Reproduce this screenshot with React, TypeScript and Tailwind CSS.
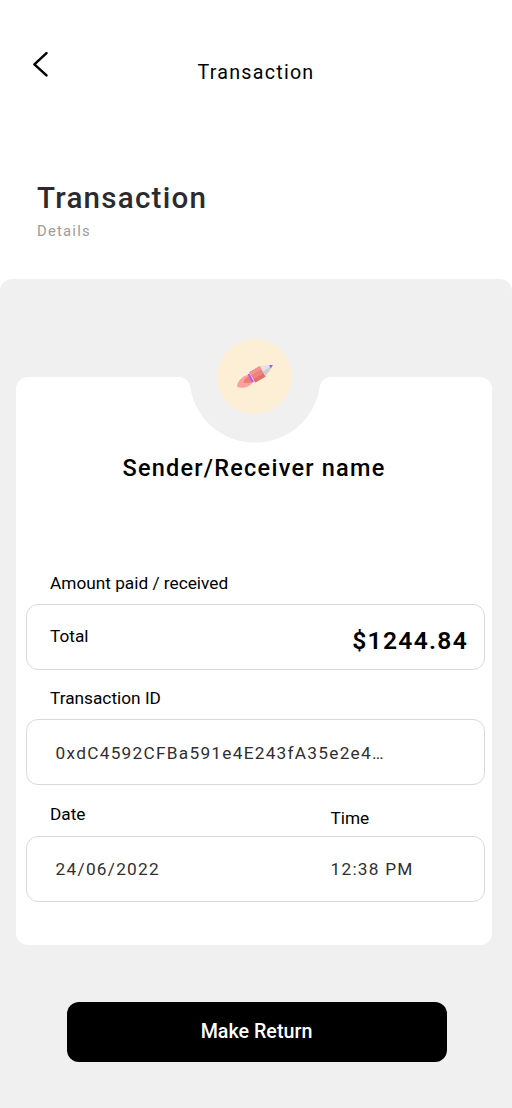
import React from "react";

function BackIcon() {
  return (
    <svg className="block h-[28px] w-[18px]" viewBox="0 0 18 28" fill="none" aria-hidden="true">
      <path d="M14.5 3.2 2.4 14.3 14.5 25.4" stroke="#000" strokeWidth="2.5" strokeLinecap="round" strokeLinejoin="round" />
    </svg>
  );
}

function Notch() {
  return (
    <svg className="mx-auto block h-[68px] w-[160px]" viewBox="175 376 160 68" aria-hidden="true">
      <path
        d="M175 376H335V377H331.5C325.5 377 320.8 381 319.7 387C315.2 418.5 288.3 442.6 255 442.6C221.7 442.6 194.8 418.5 190.3 387C189.2 381 184.5 377 178.5 377H175Z"
        fill="#f0f0f0"
      />
    </svg>
  );
}

function Rocket() {
  return (
    <svg className="block size-full" viewBox="217 339 75 75" aria-hidden="true">
      <path d="M248 374.7C242 376.2 237 381.8 237 386.8C241.5 389.3 249.5 387.3 253 382Z" fill="#f9a29d" />
      <path d="M249 376.8C246 377.4 243.6 380 243.6 382.5C246.5 383.6 250 383.2 252.6 381.6Z" fill="#ee7c78" />
      <path d="M249.3 372.3 259.8 366 265.6 376.5 255.2 382.6Z" fill="#ef827c" />
      <path d="M249.3 372.3 259.8 366 261.6 369.3 251.1 375.5Z" fill="#f3928e" />
      <path d="M253.4 379.4 263.8 373.2 265.6 376.5 255.2 382.6Z" fill="#e36f6a" />
      <path d="M259.8 366 269.3 365 271.2 368.3 265.4 376.2Z" fill="#e3e3e5" />
      <path d="M262.8 371.4 270.3 366.6 271.2 368.3 265.4 376.2Z" fill="#cdced1" />
      <path d="M269 365.1 272.9 364.9 270.9 368.5Z" fill="#a05cf0" />
      <path d="M248.5 374 253 382" stroke="#ad55fc" strokeWidth="1.9" />
    </svg>
  );
}

const box = "flex h-[66px] w-[459px] rounded-[12px] border border-[#d9d9d9]";
const label = "text-[17.25px] leading-5 text-black";
const value = "text-[17.25px] leading-5 text-[#2f2f33]";

export default function App() {
  return (
    <main className="flex h-[1108px] w-[512px] flex-col overflow-hidden bg-white font-['Roboto',sans-serif]">
      <header className="grid h-[172px] grid-cols-[1fr_auto_1fr] items-start">
        <button className="ml-8 mt-[50px] w-fit" aria-label="Back">
          <BackIcon />
        </button>
        <span className="mt-[61px] text-[19.7px] leading-6 tracking-[1.23px] text-black">Transaction</span>
      </header>
      <div className="flex h-[107px] flex-col pl-[37px] pt-2">
        <h1 className="text-[29.6px] leading-9 font-medium tracking-[1.23px] text-[#2b2b2f]">Transaction</h1>
        <p className="mt-[5px] text-[14.8px] leading-5 tracking-[1.23px] text-[#9b9b9b]">Details</p>
      </div>
      <section className="flex h-[829px] flex-col rounded-t-[12px] bg-[#f0f0f0] pt-[98px]">
        <div className="relative ml-4 flex h-[568px] w-[476px] flex-col rounded-[12px] bg-white">
          <div className="-mt-px h-[68px] w-full pl-[2px]">
            <Notch />
          </div>
          <div className="absolute left-[201px] top-[-38px] size-[75px] rounded-full bg-[#fcefd6]">
            <Rocket />
          </div>
          <h2 className="mt-[9px] text-center text-[23.5px] leading-[30px] font-medium tracking-[1.23px] text-black">
            Sender/Receiver name
          </h2>
          <div className="flex flex-col pl-[10px] pt-[90px]">
            <p className={`ml-6 ${label}`}>Amount paid / received</p>
            <div className={`mt-[11px] justify-between pl-[23px] pr-[16px] ${box}`}>
              <span className={`mt-[21px] ${label}`}>Total</span>
              <span className="mt-[21px] text-[24.6px] leading-[30px] font-semibold tracking-[1.3px] text-black">$1244.84</span>
            </div>
            <p className={`mt-[18px] ml-6 ${label}`}>Transaction ID</p>
            <div className={`mt-[11px] pl-[28.6px] ${box}`}>
              <span className={`mt-[23px] tracking-[1.26px] ${value}`}>0xdC4592CFBa591e4E243fA35e2e4…</span>
            </div>
            <div className="mt-[18px] flex h-[33px] pl-6 pt-px">
              <span className={`w-[280.5px] ${label}`}>Date</span>
              <span className={`mt-1 ${label}`}>Time</span>
            </div>
            <div className={`pl-[28.6px] ${box}`}>
              <span className={`mt-[22px] w-[275px] tracking-[1.26px] ${value}`}>24/06/2022</span>
              <span className={`mt-[22px] tracking-[1.23px] ${value}`}>12:38 PM</span>
            </div>
          </div>
        </div>
        <button className="ml-[67px] mt-[57px] flex h-[60px] w-[380px] justify-center rounded-[12px] bg-black pr-px pt-[18px] text-[19.7px] leading-6 font-medium text-white">
          Make Return
        </button>
      </section>
    </main>
  );
}
